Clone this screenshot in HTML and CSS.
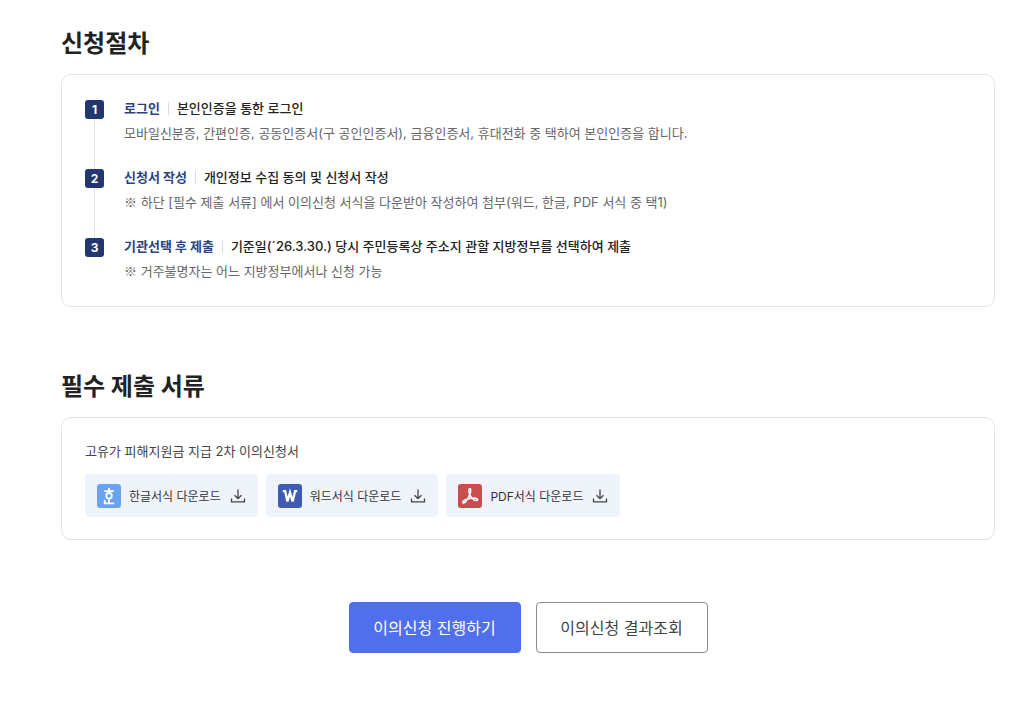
FILE: index.html
```html
<!DOCTYPE html>
<html lang="ko">
<head>
    <meta charset="UTF-8">
    <meta name="viewport" content="width=device-width, initial-scale=1.0">
    <title>이의신청 안내</title>
    <link rel="stylesheet" href="styles.css">
</head>
<body>
    <main class="content">
        <section class="section">
            <h2>신청절차</h2>
            <div class="box">
                <ol class="steps">
                    <li class="step">
                        <span class="num">1</span>
                        <div class="step-text">
                            <h3><span class="step-name">로그인</span><span class="bar"></span>본인인증을 통한 로그인</h3>
                            <p>모바일신분증, 간편인증, 공동인증서(구 공인인증서), 금융인증서, 휴대전화 중 택하여 본인인증을 합니다.</p>
                        </div>
                    </li>
                    <li class="step">
                        <span class="num">2</span>
                        <div class="step-text">
                            <h3><span class="step-name">신청서 작성</span><span class="bar"></span>개인정보 수집 동의 및 신청서 작성</h3>
                            <p><span class="mark">※</span> 하단 [필수 제출 서류] 에서 이의신청 서식을 다운받아 작성하여 첨부(워드, 한글, PDF 서식 중 택1)</p>
                        </div>
                    </li>
                    <li class="step">
                        <span class="num">3</span>
                        <div class="step-text">
                            <h3><span class="step-name">기관선택 후 제출</span><span class="bar"></span>기준일(´26.3.30.) 당시 주민등록상 주소지 관할 지방정부를 선택하여 제출</h3>
                            <p><span class="mark">※</span> 거주불명자는 어느 지방정부에서나 신청 가능</p>
                        </div>
                    </li>
                </ol>
            </div>
        </section>

        <section class="section">
            <h2>필수 제출 서류</h2>
            <div class="box">
                <p class="doc-title">고유가 피해지원금 지급 2차 이의신청서</p>
                <div class="files">
                    <a href="#" class="file">
                        <svg class="file-icon" viewBox="0 0 24 24" aria-hidden="true">
                            <rect width="24" height="24" rx="3" fill="#6ba2ee"/>
                            <g fill="none" stroke="#fff" stroke-width="1.8">
                                <path d="M12 4v3M7.2 7.2h9.6M12 14.5v4M7.7 16v3.3h9.5"/>
                                <circle cx="12" cy="11.8" r="2.8"/>
                            </g>
                        </svg>
                        <span>한글서식 다운로드</span>
                        <svg class="down-icon" viewBox="0 0 16 16" aria-hidden="true">
                            <path d="M8 1.5v9M4.5 7.2L8 10.7l3.5-3.5M1.5 10.5v3.3h13v-3.3"/>
                        </svg>
                    </a>
                    <a href="#" class="file">
                        <svg class="file-icon" viewBox="0 0 24 24" aria-hidden="true">
                            <rect width="24" height="24" rx="3" fill="#405bb5"/>
                            <path d="M4.8 7.2h2.4L9.2 16.500h.5L12 8.500l2.300 8h.5l2.300-9.300h2.200" fill="none" stroke="#fff" stroke-width="2.300"/>
                        </svg>
                        <span>워드서식 다운로드</span>
                        <svg class="down-icon" viewBox="0 0 16 16" aria-hidden="true">
                            <path d="M8 1.5v9M4.5 7.2L8 10.7l3.5-3.5M1.5 10.5v3.3h13v-3.3"/>
                        </svg>
                    </a>
                    <a href="#" class="file">
                        <svg class="file-icon" viewBox="0 0 24 24" aria-hidden="true">
                            <rect width="24" height="24" rx="3" fill="#cb4c4e"/>
                            <path d="M11.2 5c1.4-.8 2 .6 1.2 3.5-.8 3-2.6 6.5-4.3 8.7-1.3 1.8-3 2.1-3.3 1.2-.4-1.2 2.2-2.8 5.6-3.6 3.4-.8 7.3-.9 8.7.1 1.3 1 .1 2.1-1.7 1.5-2.2-.7-4.7-3.4-5.7-6.2-.8-2.3-1.1-4.7-.5-5.2z" fill="none" stroke="#fff" stroke-width="1.5" stroke-linejoin="round"/>
                        </svg>
                        <span>PDF서식 다운로드</span>
                        <svg class="down-icon" viewBox="0 0 16 16" aria-hidden="true">
                            <path d="M8 1.5v9M4.5 7.2L8 10.7l3.5-3.5M1.5 10.5v3.3h13v-3.3"/>
                        </svg>
                    </a>
                </div>
            </div>
        </section>

        <div class="buttons">
            <button type="button" class="btn btn-primary">이의신청 진행하기</button>
            <button type="button" class="btn">이의신청 결과조회</button>
        </div>
    </main>
</body>
</html>
```
FILE: styles.css
```css
* {
    box-sizing: border-box;
}

body {
    margin: 0;
    background: #fff;
    color: #222;
    font-family: Inter, "Noto Sans CJK KR", sans-serif;
    font-size: 13px;
}

h2, h3, p, ol {
    margin: 0;
    padding: 0;
}

.content {
    padding: 26px 29px 54px 61px;
}

.section {
    margin-bottom: 62px;
}

h2 {
    margin-bottom: 12px;
    font-size: 24px;
    font-weight: 700;
    line-height: 36px;
}

.box {
    padding: 22px 23px;
    border: 1px solid #e2e2e4;
    border-radius: 10px;
}

/* 신청 단계 */
.steps {
    list-style: none;
}

.step {
    position: relative;
    display: flex;
    gap: 20px;
}

.num {
    flex: none;
    width: 19px;
    height: 19px;
    margin-top: 3px;
    border-radius: 3px;
    background: #22366f;
    color: #fff;
    font-size: 12px;
    font-weight: 700;
    line-height: 19px;
    text-align: center;
}

/* 번호를 잇는 세로선 */
.step:not(:last-child)::before {
    content: "";
    position: absolute;
    top: 22px;
    bottom: -3px;
    left: 9px;
    width: 1px;
    background: #e2e3e7;
}

.step:not(:last-child) .step-text {
    padding-bottom: 20px;
}

h3 {
    display: flex;
    align-items: center;
    margin-bottom: 2px;
    font-size: 13px;
    font-weight: 500;
    line-height: 22px;
}

.step-name {
    color: #2b437f;
    font-weight: 700;
}

.bar {
    width: 1px;
    height: 13px;
    margin: 0 8px;
    background: #dcdde0;
}

.step-text p {
    color: #666;
    line-height: 25px;
}

.mark {
    font-family: "Noto Sans CJK KR", sans-serif;
    line-height: 1;
}

/* 제출 서류 */
.doc-title {
    margin-bottom: 12px;
    color: #444;
    line-height: 22px;
}

.files {
    display: flex;
    flex-wrap: wrap;
    gap: 8px;
}

.file {
    display: flex;
    align-items: center;
    height: 43px;
    padding: 0 12px;
    border-radius: 4px;
    background: #eff4fb;
    color: #333;
    font-size: 12px;
    text-decoration: none;
}

.file-icon {
    width: 24px;
    height: 24px;
    margin-right: 8px;
}

.down-icon {
    width: 16px;
    height: 16px;
    margin-left: 9px;
    fill: none;
    stroke: #444;
    stroke-width: 1.3;
}

.buttons {
    display: flex;
    justify-content: center;
    gap: 15px;
}

.btn {
    min-width: 172px;
    height: 51px;
    padding: 0 20px 2px;
    border: 1px solid #8b8b8b;
    border-radius: 4px;
    background: #fff;
    color: #444;
    font-family: inherit;
    font-size: 16px;
    cursor: pointer;
}

.btn-primary {
    border-color: #506fec;
    background: #506fec;
    color: #fff;
}
```
